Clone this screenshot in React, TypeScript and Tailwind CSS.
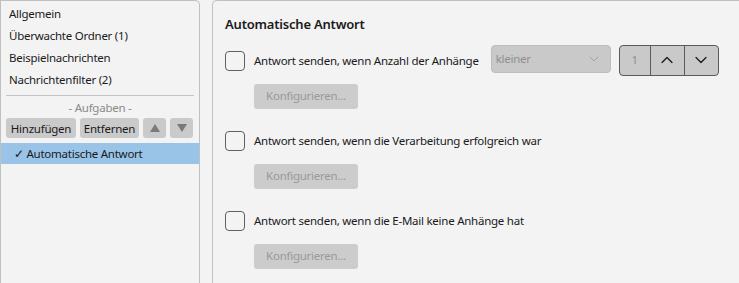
import { ChevronDown, ChevronUp } from "lucide-react";

const font = { fontFamily: '"Segoe UI", "Noto Sans", "Open Sans", sans-serif' };

function Checkbox() {
  return <div className="h-5 w-5 shrink-0 rounded-[4px] border border-[#5f5f5f] bg-[#f3f3f3]" />;
}

function ConfigButton() {
  return (
    <button
      type="button"
      disabled
      className="ml-[29px] mt-[9px] flex h-[25px] w-[104px] items-center justify-center rounded-[3px] bg-[#cccccc] text-[11.5px] tracking-[-0.25px] text-[#9a9a9a]"
    >
      Konfigurieren...
    </button>
  );
}

function Option({ label, extra }: { label: string; extra?: React.ReactNode }) {
  return (
    <div className="flex flex-col">
      <div className="flex h-[28px] items-center">
        <Checkbox />
        <span className="ml-[9px] whitespace-nowrap text-[11.5px] tracking-[-0.25px] text-[#1a1a1a]">{label}</span>
        {extra}
      </div>
      <ConfigButton />
    </div>
  );
}

export default function App() {
  const items = ["Allgemein", "Überwachte Ordner (1)", "Beispielnachrichten", "Nachrichtenfilter (2)"];

  return (
    <div
      className="flex h-[283px] w-[739px] gap-[12px] bg-[#f3f3f3] text-[11.5px] tracking-[-0.25px] text-[#1a1a1a]"
      style={font}
    >
      <div className="flex w-[200px] shrink-0 flex-col rounded-tr-[5px] border-x border-t border-[#c0c0c0] bg-[#f3f3f3]">
        <div className="flex flex-col pt-[2px]">
          {items.map((it) => (
            <div key={it} className="flex h-[22px] items-center whitespace-nowrap px-[8px]">
              {it}
            </div>
          ))}
        </div>
        <div className="mx-[5px] mt-[4px] border-t border-[#c4c4c4]" />
        <div className="mt-[3px] text-center text-[#8a8a8a]">- Aufgaben -</div>
        <div className="mt-[2px] flex gap-[4px] px-[5px]">
          <button type="button" className="h-[20px] w-[70px] whitespace-nowrap rounded-[3px] bg-[#cacaca]">
            Hinzufügen
          </button>
          <button type="button" className="h-[20px] w-[59px] whitespace-nowrap rounded-[3px] bg-[#cacaca]">
            Entfernen
          </button>
          <button type="button" className="flex h-[20px] w-[23px] items-center justify-center rounded-[3px] bg-[#cacaca]">
            <svg viewBox="0 0 10 8" className="h-[8px] w-[10px]">
              <path d="M5 0L10 8H0Z" fill="#7a7a7a" />
            </svg>
          </button>
          <button type="button" className="flex h-[20px] w-[23px] items-center justify-center rounded-[3px] bg-[#cacaca]">
            <svg viewBox="0 0 10 8" className="h-[8px] w-[10px]">
              <path d="M0 0H10L5 8Z" fill="#7a7a7a" />
            </svg>
          </button>
        </div>
        <div className="mt-[5px] flex h-[21px] items-center whitespace-nowrap bg-[#99c4e8] px-[13px]">
          ✓ Automatische Antwort
        </div>
      </div>

      <div className="flex flex-1 flex-col rounded-tl-[5px] border-l border-t border-[#c0c0c0] bg-[#f3f3f3] pl-[12px]">
        <div className="mt-[14px] text-[13px] font-semibold tracking-[-0.2px]">Automatische Antwort</div>
        <div className="mt-[12px] flex flex-col gap-[18px]">
          <Option
            label="Antwort senden, wenn Anzahl der Anhänge"
            extra={
              <div className="-mt-[2px] ml-[12px] flex items-start gap-[8px] self-start">
                <div className="flex h-[28px] w-[120px] items-center justify-between rounded-[4px] border border-[#bdbdbd] bg-[#c9c9c9] pl-[4px] pr-[8px] text-[#8f8f8f]">
                  kleiner
                  <ChevronDown size={16} strokeWidth={1} color="#8f8f8f" />
                </div>
                <div className="flex h-[31px] w-[100px] overflow-hidden rounded-[4px] border border-[#5a5a5a] bg-[#c9c9c9]">
                  <div className="flex w-[31px] items-center justify-center border-r border-[#5a5a5a] text-[#8f8f8f]">
                    1
                  </div>
                  <div className="flex w-[34px] items-center justify-center border-r border-[#5a5a5a]">
                    <ChevronUp size={20} strokeWidth={1.5} color="#1a1a1a" />
                  </div>
                  <div className="flex flex-1 items-center justify-center">
                    <ChevronDown size={20} strokeWidth={1.5} color="#1a1a1a" />
                  </div>
                </div>
              </div>
            }
          />
          <Option label="Antwort senden, wenn die Verarbeitung erfolgreich war" />
          <Option label="Antwort senden, wenn die E-Mail keine Anhänge hat" />
        </div>
      </div>
    </div>
  );
}
